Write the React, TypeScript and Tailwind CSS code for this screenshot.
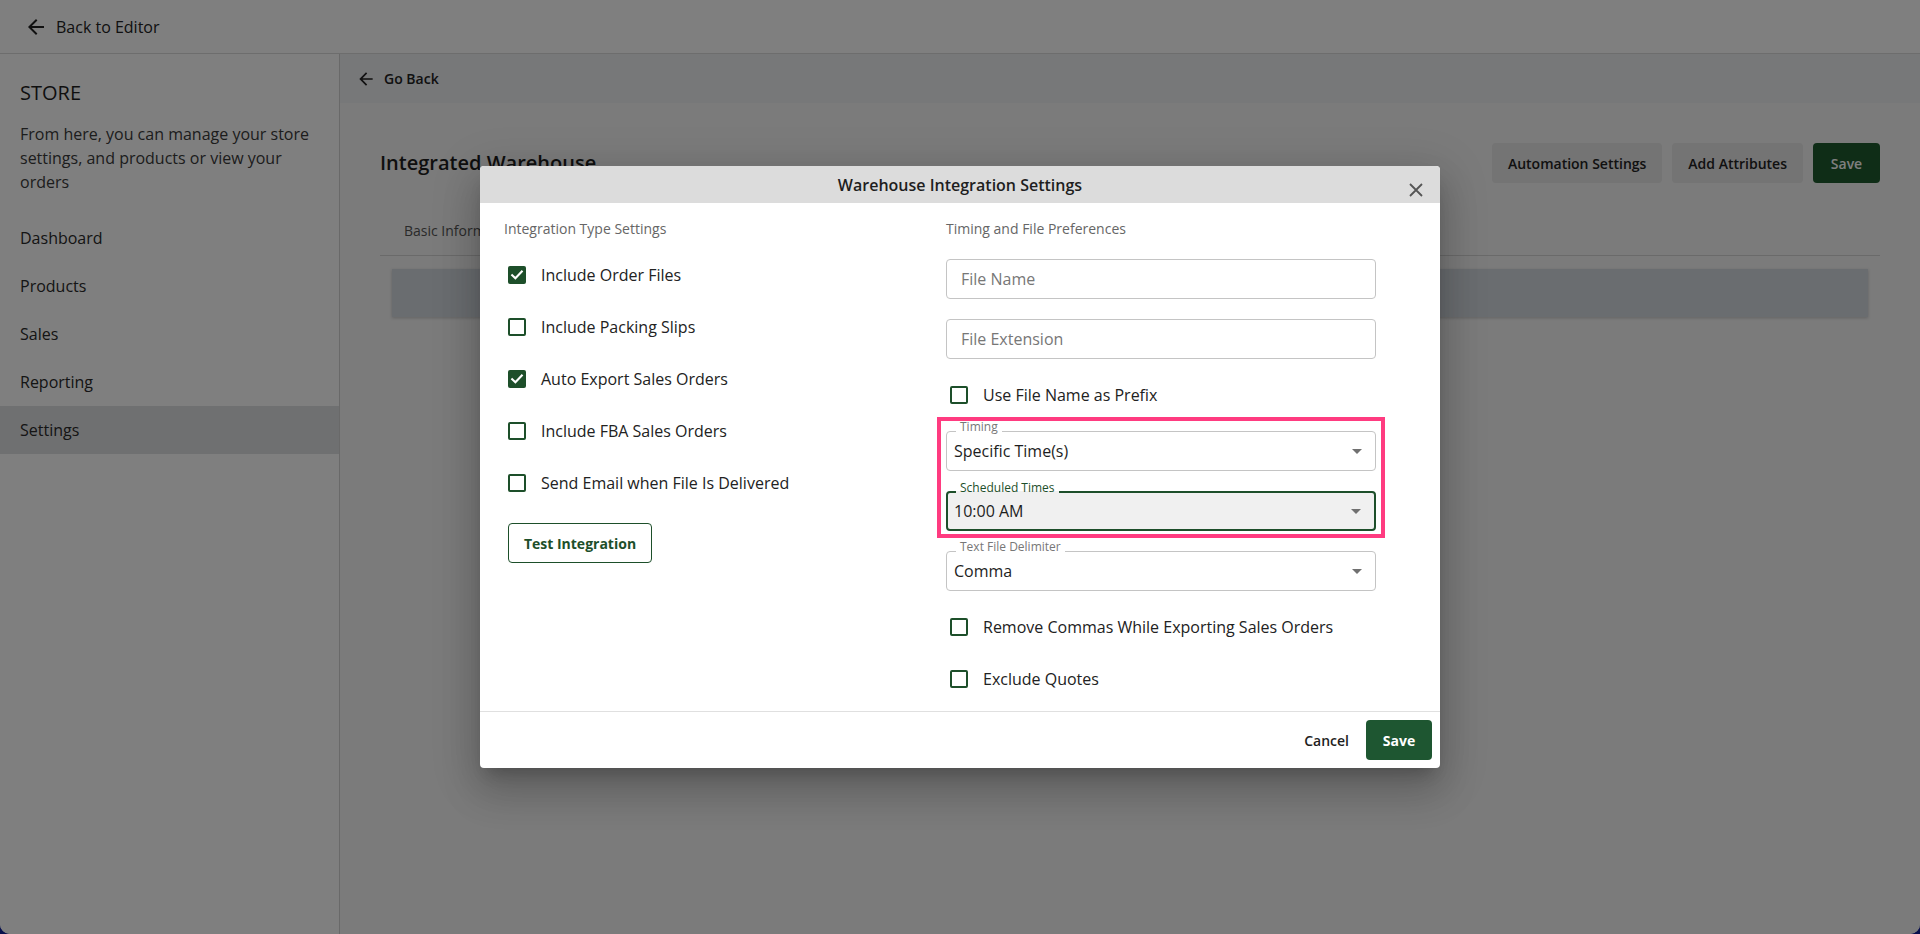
import React from "react";

function ArrowBack({ size }: { size: number }) {
  return (
    <svg width={size} height={size} viewBox="0 0 24 24" fill="currentColor">
      <path d="M20 11H7.83l5.59-5.59L12 4l-8 8 8 8 1.41-1.41L7.83 13H20v-2z" />
    </svg>
  );
}

function Caret() {
  return (
    <svg width="24" height="24" viewBox="0 0 24 24" className="absolute right-[6px] top-1/2 -translate-y-1/2 text-[#707070]" fill="currentColor">
      <path d="M7 10l5 5 5-5z" />
    </svg>
  );
}

function Check({ checked, label }: { checked?: boolean; label: string }) {
  return (
    <div className="h-[52px] flex items-center">
      <div
        className={
          checked
            ? "ml-[4px] w-[18px] h-[18px] rounded-[2px] bg-[#1d4f2a] flex items-center justify-center"
            : "ml-[4px] w-[18px] h-[18px] rounded-[2px] border-2 border-[#1d4f2a]"
        }
      >
        {checked && (
          <svg width="14" height="14" viewBox="0 0 14 14" fill="none">
            <polyline points="2.2,7.2 5.4,10.3 11.8,3.6" stroke="white" strokeWidth="2.1" strokeLinecap="square" />
          </svg>
        )}
      </div>
      <span className="ml-[15px] text-[16px] text-[#222]">{label}</span>
    </div>
  );
}

export default function App() {
  return (
    <div className="w-full h-[934px] bg-[#13209a] relative overflow-hidden font-['Open_Sans',sans-serif]">
      <div className="h-full rounded-b-[10px] overflow-hidden bg-white flex flex-col">
        {/* Top bar */}
        <div className="h-[54px] shrink-0 border-b border-[#dadada] flex items-center pl-[24px] text-[#222]">
          <ArrowBack size={24} />
          <span className="ml-[8px] text-[16px]">Back to Editor</span>
        </div>
        <div className="flex flex-1 min-h-0">
          {/* Sidebar */}
          <aside className="w-[340px] shrink-0 border-r border-[#d2d2d2] bg-white pt-[25px]">
            <div className="px-5 text-[20px] leading-[28px] font-medium text-[#1e1e1e]">STORE</div>
            <p className="px-5 mt-[15px] text-[16px] leading-[24px] text-[#3a3a3a]">
              From here, you can manage your store settings, and products or view your orders
            </p>
            <nav className="mt-[20px]">
              {["Dashboard", "Products", "Sales", "Reporting", "Settings"].map((n) => (
                <div
                  key={n}
                  className={
                    n === "Settings"
                      ? "h-[48px] px-5 flex items-center text-[16px] text-[#2a2a2a] bg-[#dfe0e3]"
                      : "h-[48px] px-5 flex items-center text-[16px] text-[#2a2a2a]"
                  }
                >
                  {n}
                </div>
              ))}
            </nav>
          </aside>
          {/* Main */}
          <main className="flex-1 bg-[#f6f6f6] flex flex-col">
            <div className="h-[49px] shrink-0 bg-[#eef0f3] flex items-center pl-[16px] text-[#222]">
              <ArrowBack size={20} />
              <span className="ml-[8px] text-[14px] font-semibold">Go Back</span>
            </div>
            <div className="px-[40px] pt-[40px]">
              <div className="h-[40px] flex items-center justify-between">
                <h1 className="text-[20px] font-semibold text-[#1e1e1e]">Integrated Warehouse</h1>
                <div className="flex gap-[10px]">
                  <button className="h-[40px] px-[16px] rounded-[4px] bg-[#e8e8e8] text-[14px] font-semibold text-[#222]">
                    Automation Settings
                  </button>
                  <button className="h-[40px] px-[16px] rounded-[4px] bg-[#e8e8e8] text-[14px] font-semibold text-[#222]">
                    Add Attributes
                  </button>
                  <button className="h-[40px] w-[67px] rounded-[4px] bg-[#1e5a2e] text-[14px] font-semibold text-white">
                    Save
                  </button>
                </div>
              </div>
              <div className="mt-[22px] border-b border-[#d4d4d4] flex">
                <div className="h-[50px] px-6 flex items-center text-[14px] text-[#555]">Basic Information</div>
              </div>
              <div className="mt-[13px] mx-[12px] h-[48px] bg-[#d5dae0] shadow-[0_1px_3px_rgba(0,0,0,0.2)]" />
            </div>
          </main>
        </div>
      </div>

      {/* Overlay + modal */}
      <div className="absolute inset-0 bg-black/50 flex items-center justify-center">
        <div className="w-[960px] bg-white rounded-[4px] shadow-[0_11px_15px_-7px_rgba(0,0,0,0.2),0_24px_38px_3px_rgba(0,0,0,0.14),0_9px_46px_8px_rgba(0,0,0,0.12)] relative">
          <div className="h-[37px] bg-[#dcdcdc] rounded-t-[4px] flex items-center justify-center">
            <span className="text-[16px] font-semibold text-[#1e1e1e]">Warehouse Integration Settings</span>
          </div>
          <svg className="absolute right-[17px] top-[17px]" width="14" height="14" viewBox="0 0 14 14">
            <path d="M1 1L13 13M13 1L1 13" stroke="#555" strokeWidth="1.8" />
          </svg>

          <div className="flex px-6 pt-4 pb-[6px]">
            {/* Left column */}
            <div className="w-[442px] shrink-0">
              <div className="text-[14px] leading-[20px] text-[#666]">Integration Type Settings</div>
              <div className="mt-[10px]">
                <Check checked label="Include Order Files" />
                <Check label="Include Packing Slips" />
                <Check checked label="Auto Export Sales Orders" />
                <Check label="Include FBA Sales Orders" />
                <Check label="Send Email when File Is Delivered" />
              </div>
              <button className="ml-[4px] mt-[14px] h-[40px] w-[144px] rounded-[4px] border border-[#1d4f2a] text-[14px] font-bold text-[#1d4f2a]">
                Test Integration
              </button>
            </div>

            {/* Right column */}
            <div className="w-[430px] shrink-0">
              <div className="text-[14px] leading-[20px] text-[#666]">Timing and File Preferences</div>
              <div className="mt-[20px] h-[40px] border border-[#c4c4c4] rounded-[4px] px-[14px] flex items-center text-[16px] text-[#777]">
                File Name
              </div>
              <div className="mt-[20px] h-[40px] border border-[#c4c4c4] rounded-[4px] px-[14px] flex items-center text-[16px] text-[#777]">
                File Extension
              </div>
              <div className="mt-[10px]">
                <Check label="Use File Name as Prefix" />
              </div>

              <div className="relative mt-[10px]">
                <div className="relative h-[40px] border border-[#c4c4c4] rounded-[4px] pl-[7px] flex items-center text-[16px] text-[#1e1e1e]">
                  <span className="absolute left-[9px] top-[-12px] px-[4px] bg-white text-[12px] leading-[14px] text-[#777]">Timing</span>
                  Specific Time(s)
                  <Caret />
                </div>
                <div className="relative mt-[20px] h-[40px] border-2 border-[#1d4f2a] rounded-[4px] bg-[#f0f0f0] pl-[6px] flex items-center text-[16px] text-[#1e1e1e]">
                  <span className="absolute left-[8px] top-[-12px] px-[4px] bg-[linear-gradient(to_bottom,#ffffff_70%,#f0f0f0_70%)] text-[12px] leading-[14px] text-[#1d4f2a]">
                    Scheduled Times
                  </span>
                  10:00 AM
                  <Caret />
                </div>
                <div className="absolute left-[-9px] right-[-9px] top-[-14px] bottom-[-7px] border-[4px] border-[#ff3b80] pointer-events-none" />
              </div>

              <div className="relative mt-[20px] h-[40px] border border-[#c4c4c4] rounded-[4px] pl-[7px] flex items-center text-[16px] text-[#1e1e1e]">
                <span className="absolute left-[9px] top-[-12px] px-[4px] bg-white text-[12px] leading-[14px] text-[#777]">
                  Text File Delimiter
                </span>
                Comma
                <Caret />
              </div>
              <div className="mt-[10px]">
                <Check label="Remove Commas While Exporting Sales Orders" />
                <Check label="Exclude Quotes" />
              </div>
            </div>
          </div>

          <div className="border-t border-[#e0e0e0] flex justify-end items-center gap-[9px] py-2 pr-2">
            <button className="h-[40px] px-[8px] text-[14px] font-semibold text-[#1e1e1e]">Cancel</button>
            <button className="h-[40px] w-[66px] rounded-[4px] bg-[#1e5631] text-[14px] font-bold text-white">Save</button>
          </div>
        </div>
      </div>
    </div>
  );
}
